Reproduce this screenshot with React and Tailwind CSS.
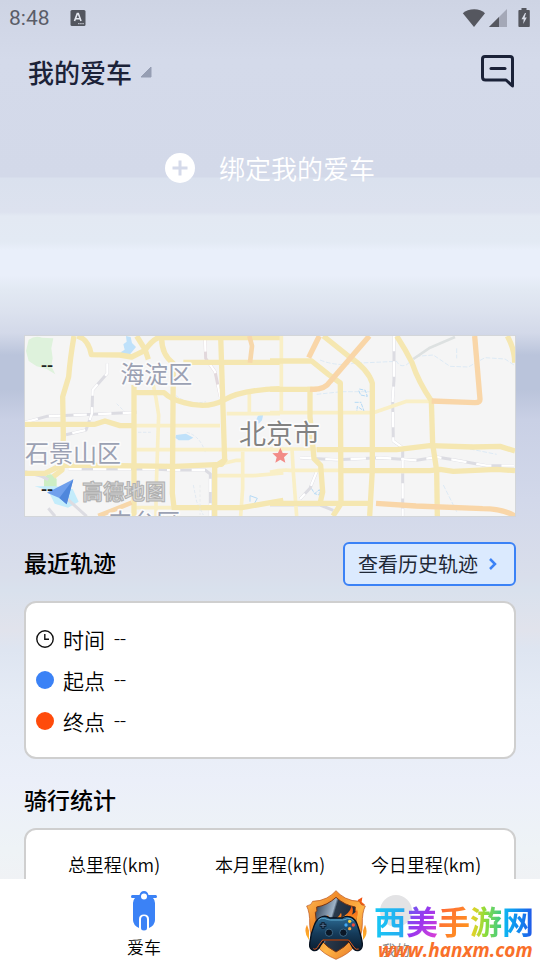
// src/App.jsx

const StatusBar = () => (
  <div className="flex h-9 items-center justify-between pl-[9px] pr-[10px] text-[#5a5d68]">
    <div className="flex items-center gap-5">
      <span className="font-[Roboto,sans-serif] text-[21px] leading-6">8:48</span>
      <svg className="size-4" viewBox="0 0 16 16">
        <rect x="0.5" width="15" height="16" rx="1.5" fill="#53565f" />
        <path d="M4.5 11 7.3 3.6h1L11 11M5.6 8.7h4.4" fill="none" stroke="#e4e7f0" strokeWidth="1.6" />
        <path d="M8.3 13.6h1.1m1 0h1.1m1 0h1.1" stroke="#e4e7f0" strokeWidth="1.2" />
      </svg>
    </div>
    <div className="flex items-center">
      <svg className="h-5 w-6" viewBox="0 0 24 20">
        <path d="M12 19 .8 5.2C6 .2 18-.2 23 5.2z" fill="#55575f" />
      </svg>
      <svg className="ml-0.5 h-5 w-5" viewBox="0 0 20 20">
        <path d="M19 1v18H1z" fill="#a4a8b7" />
        <path d="M11 9v10H1z" fill="#55575f" />
      </svg>
      <svg className="ml-2.5 h-5 w-3" viewBox="0 0 12 20">
        <path d="M3.5 0h5v2H11q.8 0 .8 1v15q0 1-.8 1H1.200q-.8 0-.8-1V3q0-1 .8-1h2.300z" fill="#55575f" />
        <path d="M7 5 3.500 11.200h2.200L5.200 16l3.600-6.500H6.600L8 5z" fill="#d9dde8" />
      </svg>
    </div>
  </div>
);

const CityMap = () => (
  <svg
    className="block h-[180px] w-full"
    viewBox="0 0 1470 540"
    preserveAspectRatio="xMidYMid slice"
    role="img"
    aria-label="北京市"
  >
    <rect width="1470" height="540" fill="#f5f5f5" />

    {/* western half */}
    <g transform="translate(-15 -33)" fill="none" strokeLinejoin="round">
      <path d="M26 44q20-14 40-6l34 2-6 30 4 30-4 24 12 24-26-16-30-8-24-16-8-30z" fill="#def2dc" stroke="none" />
      <path d="M72 458q20-22 38 4v28H72z" fill="#cdeec5" stroke="none" />
      <path d="m318 33 14 3 4 18 12 12-18 22-16 6-12-12 12-8-4-16 10-8zM468 330l30-4 22 12-14 8h-30l-10-8z" fill="#bfe1fa" stroke="none" />
      <path d="m44 484 40 12 20 40 40 12 32-18-18-38-52-8z" fill="#c3ecfb" stroke="none" />
      <path d="m706 290 8-18 16-4-4 18-10 10zM708 320l10-10v16z" fill="#c0e2fb" stroke="none" />
      <path d="M468 212q40 30 90 18M500 322q40 10 56 60M354 322h38M290 236l30 30M520 480l10 50 20 40" stroke="#d8e4f0" strokeWidth="2" strokeDasharray="10 5" />
      <path d="M690 512l22 8-8 14M690 530v-18" stroke="#b5daf5" strokeWidth="3" />

      {/* railways */}
      <g stroke="#dcdce2" strokeWidth="9">
        <path d="M15 292 80 274l140-6 130-6M262 115v30l-44 50-2 70-18 50-60 14M145 432h250l60 3h100l16 12v126M15 440l50 14 20 10M85 550l20 24M140 520l60 54" />
        <path d="M555 40l2 60 28 40 16 75" stroke="#e2d8dc" />
      </g>
      <g stroke="#ffffff" strokeWidth="7" strokeDasharray="40 34">
        <path d="M15 292 80 274l140-6 130-6M262 115v30l-44 50-2 70-18 50-60 14M555 40l2 60 28 40 16 75M145 432h250l60 3h100l16 12v126" />
      </g>

      {/* minor roads */}
      <g stroke="#f9efc6" strokeWidth="11">
        <path d="M340 302h260M350 374h440M400 180l8 40 8 50-8 240v63M345 548h110M620 266h160M688 200v66M590 420l60-14h20M668 380v110l-6 83M590 452h110l90-8" />
      </g>
      {/* main roads */}
      <g stroke="#f5e7b1" strokeWidth="16">
        <path d="M162 33q-12 70-16 122l-18 60 2 120-4 100-26 20" />
        <path d="M15 298h210l30-10 45 14h45" />
        <path d="M172 33q34 10 42 56l85 1 36 6 40-20q20-30 40-38h370" />
        <path d="m350 33 25 40 10 30M425 40q0 50 35 75l-3 390 8 68" />
        <path d="M342 180v393M342 203h90q20 20 60 30 70 20 120-8 50-30 168-34" />
        <path d="M490 112h290M602 33l12 372-30 20v148" />
        <path d="M15 445h60l50-25 340 4 140-6 12-18" />
        <path d="M465 548h200l125-22" />
      </g>
      <path d="m688 33 8 30-6 50M235 573l100-40" stroke="#f7d7aa" strokeWidth="14" />
      <path d="M540 480v90" stroke="#e4e8ec" strokeWidth="2" strokeDasharray="8 6" />
    </g>

    {/* eastern half */}
    <g transform="translate(735 -33)" fill="none" strokeLinejoin="round">
      <path d="M150 105q50 20 100 10l130-6q10 20 30 10l30-25 50-4 50 34 55 2 50-28 60 4 30 20M140 208l75-8h95M560 70v30M600 372l80 16M520 480l40 80" stroke="#d0e4f4" strokeWidth="2" strokeDasharray="14 5" />
      <path d="M268 192l18 4 6 18-20-4-6-14m8 40 8 22-20-14-2 18m-6-30h20M124 490l10 16 14-12v16l-14-4" stroke="#b5daf5" strokeWidth="3" strokeDasharray="12 3" />
      <path d="m430 102 50-34 75-32" stroke="#dde1e1" strokeWidth="8" />
      <g stroke="#dcdce2" strokeWidth="9">
        <path d="M372 33v130l-4 60 2 125 28 20v206M90 398l110 6 130-6 110 8 60-10 60 10 90 16h82M140 440l-20 50-30 32M0 540h150l40 16" />
      </g>
      <g stroke="#ffffff" strokeWidth="7" strokeDasharray="46 30">
        <path d="M372 33v130l-4 60 2 125 28 20v206M90 398l110 6 130-6 110 8 60-10 60 10 90 16h82M140 440l-20 50-30 32" />
      </g>
      <g stroke="#f9efc6" strokeWidth="11">
        <path d="M34 33v230M0 263h310l100-34h75M0 372h140M66 372l4 70 10 131M0 442q30-8 60-6h150" />
      </g>
      <g stroke="#f5e7b1" strokeWidth="16">
        <path d="M0 108h125l50 40 36 26 2 362-24 37" />
        <path d="m160 33 75 60q60 40 72 82v260l-8 138" />
        <path d="M380 33q26 40 46 80 20 60 58 114l4 130 12 80 2 136" />
        <path d="M120 185v90l12 126 20 20 6 80-8 34" />
        <path d="M140 374h240l100-12 130 4 80-2 45 14" />
        <path d="M210 437h270l30-4 40 6 130-6 55 4" />
        <path d="M0 535h305" />
        <path d="M712 33q22 40 22 80" />
        <path d="M0 193h140" />
      </g>
      <path d="m148 33-32 65M298 33 180 170q-16 26-60 23M614 33l16 190q0 10-15 10l-130-5M318 535l120 8 200 8q60 0 97 22" stroke="#f9d6a8" strokeWidth="16" />
      <path d="m31 368 7 16 17 1-13 12 4 16-15-9-15 9 4-16-13-12 17-1z" fill="#f28b87" />
    </g>

    <g
      fontFamily="'Noto Sans CJK SC', sans-serif"
      fill="#9ba1b3"
      stroke="#fbfbfb"
      strokeWidth="10"
      paintOrder="stroke"
      strokeLinejoin="round"
    >
      <text x="286" y="142" fontSize="72">海淀区</text>
      <text x="0" y="378" fontSize="72">石景山区</text>
      <text x="250" y="584" fontSize="72">丰台区</text>
      <text x="642" y="323" fontSize="81" fill="#828282">北京市</text>
    </g>
    <text
      x="171"
      y="489"
      fontSize="63"
      fontWeight="700"
      fontFamily="'Noto Sans CJK SC', sans-serif"
      fill="#d8d8d8"
      stroke="#b0b0b0"
      strokeWidth="3"
    >
      高德地图
    </text>
    <path d="M145 430 66 470l37 16 22 19z" fill="#6f9fec" />
    <path d="m145 430-42 56 22 19z" fill="#4f87dc" />
  </svg>
);

const ClockIcon = () => (
  <svg className="size-[18px]" viewBox="0 0 18 18" fill="none" stroke="#111" strokeWidth="1.400">
    <circle cx="9" cy="9" r="8.200" />
    <path d="M8.800 4v5.300h4.200" />
  </svg>
);

const ScooterIcon = () => (
  <svg className="h-10 w-[26px]" viewBox="0 0 26 40">
    <path d="M1.300 4h7.200q1-4 4.500-4t4.500 4h7.200q1.300 0 1.300 1.500T24.700 7H22q2 2 2 5v17q0 5-6 8v-9q0-4.500-5-4.500t-5 4.500v9q-6-3-6-8V12q0-3 2-5H1.300Q0 7 0 5.500T1.300 4z" fill="#3b82f6" />
    <circle cx="13" cy="5.500" r="3" fill="#fff" />
    <path d="M13 25q3 0 3 3.500v8.500q0 2.500-3 2.500t-3-2.500v-8.500q0-3.500 3-3.500z" fill="#3b82f6" />
  </svg>
);

const ShieldLogo = () => (
  <svg className="h-[70px] w-[62px] shrink-0" viewBox="0 0 186 210">
    <defs>
      <linearGradient id="rim" x1="0" y1="0" x2="1" y2="1">
        <stop offset="0" stopColor="#ffc35a" />
        <stop offset="0.3" stopColor="#f08a2a" />
        <stop offset="0.6" stopColor="#ffb648" />
        <stop offset="1" stopColor="#e0641a" />
      </linearGradient>
      <linearGradient id="steel" x1="0" y1="0" x2="1" y2="0.4">
        <stop offset="0" stopColor="#26364a" />
        <stop offset="0.45" stopColor="#9fb3c8" />
        <stop offset="0.5" stopColor="#2b3a4c" />
        <stop offset="1" stopColor="#1a2432" />
      </linearGradient>
      <linearGradient id="flame" x1="0" y1="0" x2="0" y2="1">
        <stop offset="0" stopColor="#f2500f" />
        <stop offset="1" stopColor="#ffb52e" />
      </linearGradient>
      <linearGradient id="pad" x1="0" y1="0" x2="0" y2="1">
        <stop offset="0" stopColor="#2d6d96" />
        <stop offset="0.5" stopColor="#153b5a" />
        <stop offset="1" stopColor="#0b1d30" />
      </linearGradient>
    </defs>
    <path d="M12 150Q-6 126 6 104l6 18zM174 150q18-20 6-46l-6 18zM158 30l14-8-2 14 10 8-14 8z" fill="url(#flame)" />
    <path d="M93 2q10 12 28 22 20 10 42 10 3 12 18 14-10 20-9 54 0 74-79 106Q14 176 14 102q1-34-9-54 15-2 18-14 22 0 42-10Q83 14 93 2z" fill="url(#rim)" stroke="#b8501a" strokeWidth="2" />
    <path d="M93 22q26 24 58 29-3 13 4 17-3 20-3 40-2 48-59 78-57-30-59-78 0-20-3-40 7-4 4-17 32-5 58-29z" fill="url(#steel)" stroke="#7a3512" strokeWidth="3" />
    <path d="M44 92q20-2 24-18 8 12 4 16 26 0 36-22 4 10-2 16 28-12 34-36 8 14 0 26 14-6 16-16 6 16-4 32l-8 20H50z" fill="url(#flame)" />
    <path d="M100 94q16-4 24-20l-2 18 14-8-8 18H100z" fill="#ffd54f" />
    <path d="M52 80q12-4 22 4h38q10-8 24-3 16 6 22 26 12 34 14 54 1 16-10 20-14 4-22-14l-10-17H58l-12 17q-8 18-22 14-12-4-10-20 2-28 14-56 8-20 24-25z" fill="url(#pad)" stroke="#06111f" strokeWidth="4" />
    <path d="M40 90q8-8 18-5 12 5 18 5h36q8 0 16-5 10-2 18 7" fill="none" stroke="#5ea9cf" strokeWidth="3" />
    <path d="M54 96v20M44 106h20" stroke="#0a1524" strokeWidth="9" />
    <path d="M54 98v16M46 106h16" stroke="#56789a" strokeWidth="3" />
    <circle cx="72" cy="128" r="11" fill="#0b1726" stroke="#3c6887" strokeWidth="3" />
    <circle cx="115" cy="128" r="11" fill="#0b1726" stroke="#3c6887" strokeWidth="3" />
    <circle cx="134" cy="94" r="5" fill="#f8d43a" />
    <circle cx="145" cy="105" r="5" fill="#f04b3a" />
    <circle cx="123" cy="105" r="5" fill="#3fa9f5" />
    <circle cx="134" cy="116" r="5" fill="#f8a63a" />
    <path d="M25 176q8 6 16-10l12-16h78l16 22q6 9 14 5" fill="none" stroke="#e45a1b" strokeWidth="3" />
  </svg>
);

const Watermark = () => (
  <div className="pointer-events-none absolute bottom-0 right-1.5 flex items-end gap-[7px]">
    <ShieldLogo />
    <div className="flex flex-col">
      <p className="whitespace-nowrap text-[32px] font-bold leading-10">
        <span className="bg-linear-to-r from-[#16c8f5] to-[#27a9ef] bg-clip-text text-transparent">西</span>
        <span className="bg-linear-to-br from-[#4b62f2] via-[#9a35ee] to-[#e83bd0] bg-clip-text text-transparent">美</span>
        <span className="bg-linear-to-br from-[#ff5d3a] to-[#ff9d0a] bg-clip-text text-transparent">手</span>
        <span className="bg-linear-to-r from-[#f0cf20] via-[#86dc3a] to-[#30c886] bg-clip-text text-transparent">游</span>
        <span className="bg-linear-to-r from-[#12bdf2] to-[#2352e8] bg-clip-text text-transparent">网</span>
      </p>
      <p className="pl-1 font-['Open_Sans',sans-serif] text-[19px] font-bold italic leading-5 text-[#f9702a]">
        www.hanxm.com
      </p>
    </div>
  </div>
);

const App = () => {
  const track = [
    { label: "时间", icon: <ClockIcon /> },
    { label: "起点", icon: <span className="size-[18px] rounded-full bg-[#3b82f6]" /> },
    { label: "终点", icon: <span className="size-[18px] rounded-full bg-[#ff4b0b]" /> },
  ];
  const stats = ["总里程(km)", "本月里程(km)", "今日里程(km)"];

  return (
    <div className="flex h-screen flex-col bg-[linear-gradient(to_bottom,#ced4e4_0px,#d4daea_60px,#d3d9e9_177px,#dae1ee_178px,#dde2ef_212px,#e3e9f3_216px,#e3eaf4_242px,#e9effa_250px,#e9effa_275px,#e2e9f3_290px,#dde3ef_308px,#d3d9e9_333px,#bac4db_355px,#bac4db_390px,#c9d0e5_420px,#d2d8ea_500px,#d9deeb_575px,#d9e1ed_590px,#e1e3ec_630px,#dee5f1_650px,#e5ebf5_700px,#ebeff9_780px,#eef3f6_850px,#f0f2f5_880px)] font-['Noto_Sans_CJK_SC',sans-serif]">
      <StatusBar />

      <main className="min-h-0 flex-1 overflow-y-auto px-6 [scrollbar-width:none]">
        {/* Header */}
        <header className="flex h-[72px] items-center justify-between pl-1">
          <button type="button" className="flex items-center gap-2">
            <h1 className="text-[26px] font-medium leading-8 text-[#1b2238]">我的爱车</h1>
            <svg className="size-3" viewBox="0 0 12 12">
              <path d="M11 1v10H1z" fill="#969eb3" stroke="#969eb3" strokeLinejoin="round" />
            </svg>
          </button>
          <button type="button" aria-label="消息">
            <svg className="h-9 w-9" viewBox="0 0 36 36" fill="none" stroke="#1b2238" strokeWidth="3" strokeLinejoin="round">
              <path d="M5 2.500h25Q32.500 2.500 32.500 5v27l-6.500-6H5.500Q2.500 26 2.500 23V5Q2.500 2.500 5 2.500z" />
              <path d="M11 14.500h14" strokeLinecap="round" />
            </svg>
          </button>
        </header>

        {/* Bind vehicle */}
        <button type="button" className="mx-auto mt-10 flex items-center gap-6 text-[26px] font-[350] leading-10 text-white">
          <svg className="size-[30px]" viewBox="0 0 30 30">
            <circle cx="15" cy="15" r="15" fill="#fff" />
            <path d="M15 7.500v15M7.500 15h15" stroke="#d5daea" strokeWidth="3" />
          </svg>
          绑定我的爱车
        </button>

        {/* Map */}
        <section className="relative mt-[147px] border border-[#d3d6da]">
          <CityMap />
          <span className="absolute left-4 top-4 font-[Roboto,sans-serif] text-lg font-medium leading-7 text-[#222]">--</span>
          <span className="absolute bottom-3 left-4 font-[Roboto,sans-serif] text-lg font-medium leading-7 text-[#222]">--</span>
        </section>

        {/* Recent track */}
        <div className="mt-[25px] flex items-start justify-between">
          <h2 className="text-[23px] font-medium leading-10 text-black">最近轨迹</h2>
          <button
            type="button"
            className="flex h-11 items-center gap-2.5 rounded-md border-2 border-[#3b82f6] bg-[#dbeafe] pl-[13px] pr-4 text-xl text-[#1f2937]"
          >
            查看历史轨迹
            <svg className="h-3 w-2.5" viewBox="0 0 10 12" fill="none" stroke="#3b82f6" strokeWidth="2.500">
              <path d="m2 1 5 5-5 5" />
            </svg>
          </button>
        </div>
        <section className="mt-[15px] flex flex-col gap-[9px] rounded-xl border-2 border-[#cfcfcf] bg-white px-2.5 py-5">
          {track.map((row) => (
            <div key={row.label} className="flex items-center gap-[9px] text-[21px] font-[350] leading-8 text-black">
              {row.icon}
              <span>{row.label}</span>
              <span className="font-[Roboto,sans-serif] font-light">--</span>
            </div>
          ))}
        </section>

        {/* Riding stats */}
        <h2 className="mt-6 text-[23px] font-medium leading-8 text-black">骑行统计</h2>
        <section className="mt-[13px] grid grid-cols-3 rounded-xl border-2 border-[#cfcfcf] bg-white px-2.5 py-[18px] text-center text-lg font-[350] leading-8 text-black">
          {stats.map((label) => (
            <p key={label}>{label}</p>
          ))}
        </section>
      </main>

      {/* Bottom tabs */}
      <nav className="relative grid h-[81px] shrink-0 grid-cols-2 bg-white px-[18px] leading-6">
        <button type="button" className="flex flex-col items-center gap-1 pt-3 text-[17px] font-[350] text-black">
          <ScooterIcon />
          爱车
        </button>
        <button type="button" className="flex flex-col items-center pt-4 text-sm text-[#8a8a8a]">
          <span className="flex h-11 items-start">
            <span className="size-8 rounded-full bg-[#e3e3e5]" />
          </span>
          我的
        </button>
        <Watermark />
      </nav>
    </div>
  );
};

export default App;
